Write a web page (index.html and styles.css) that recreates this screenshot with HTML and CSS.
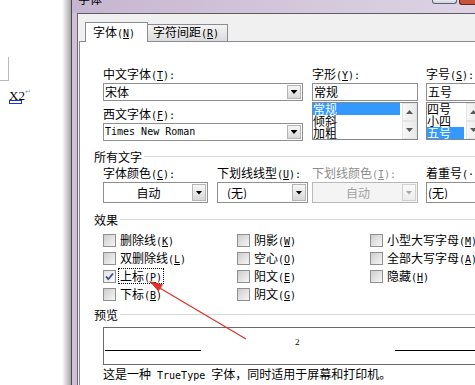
FILE: index.html
```html
<!DOCTYPE html>
<html lang="zh-CN">
<head>
<meta charset="utf-8">
<title>字体</title>
<link rel="stylesheet" href="styles.css">
</head>
<body>
<div class="screen">
  <div class="doc">
    <div class="corner"></div>
    <div class="xline">X2<span class="pmark">↵</span></div>
    <div class="tag"></div>
  </div>
  <div class="shadow"></div>
  <div class="dialog">
    <div class="titlebar">
      <span class="title">字体</span>
      <div class="tb-btns"><span class="tb-max"></span><span class="tb-close"></span></div>
    </div>
    <div class="frame">
      <div class="client">
        <div class="tabs">
          <div class="tab active">字体<span class="k">(<u>N</u>)</span></div>
          <div class="tab">字符间距<span class="k">(<u>R</u>)</span></div>
        </div>
        <div class="panel">
          <div class="fonts">
            <div class="col w200">
              <div class="lbl">中文字体<span class="k">(<u>T</u>):</span></div>
              <div class="combo"><span class="val">宋体</span><span class="dd"></span></div>
              <div class="lbl gap7">西文字体<span class="k">(<u>F</u>):</span></div>
              <div class="combo"><span class="val k">Times New Roman</span><span class="dd"></span></div>
            </div>
            <div class="col w106 ml9">
              <div class="lbl">字形<span class="k">(<u>Y</u>):</span></div>
              <div class="edit">常规</div>
              <div class="list">
                <div class="items"><div class="item sel">常规</div><div class="item">倾斜</div><div class="item">加粗</div></div>
                <div class="vscroll"><span class="sb up"></span><span class="sb down"></span></div>
              </div>
            </div>
            <div class="col w56 ml8">
              <div class="lbl">字号<span class="k">(<u>S</u>):</span></div>
              <div class="edit">五号</div>
              <div class="list">
                <div class="items"><div class="item">四号</div><div class="item">小四</div><div class="item sel">五号</div></div>
                <div class="vscroll"><span class="sb up"></span><span class="sb down"></span></div>
              </div>
            </div>
          </div>

          <div class="sep sep1">所有文字</div>

          <div class="attrs">
            <div class="col w105">
              <div class="lbl">字体颜色<span class="k">(<u>C</u>):</span></div>
              <div class="combo tall center"><span class="val">自动</span><span class="dd"></span></div>
            </div>
            <div class="col w91 ml9">
              <div class="lbl">下划线线型<span class="k">(<u>U</u>):</span></div>
              <div class="combo tall pad8"><span class="val">(无)</span><span class="dd"></span></div>
            </div>
            <div class="col w106 ml4">
              <div class="lbl dim">下划线颜色<span class="k">(<u>I</u>):</span></div>
              <div class="combo tall center off"><span class="val">自动</span><span class="dd"></span></div>
            </div>
            <div class="col w70 ml8">
              <div class="lbl">着重号<span class="k">(·)</span></div>
              <div class="combo tall"><span class="val">(无)</span><span class="dd"></span></div>
            </div>
          </div>

          <div class="sep sep2">效果</div>

          <div class="effects">
            <div class="cb"><span class="box"></span><span class="t">删除线<span class="k">(<u>K</u>)</span></span></div>
            <div class="cb"><span class="box"></span><span class="t">双删除线<span class="k">(<u>L</u>)</span></span></div>
            <div class="cb"><span class="box on"><svg width="11" height="11" viewBox="0 0 11 11"><path d="M2 5.5 L4.3 8.2 L9 2.5" fill="none" stroke="#3b4f86" stroke-width="1.8"/></svg></span><span class="t focus">上标<span class="k">(<u>P</u>)</span></span></div>
            <div class="cb"><span class="box"></span><span class="t">下标<span class="k">(<u>B</u>)</span></span></div>
            <div class="cb"><span class="box"></span><span class="t">阴影<span class="k">(<u>W</u>)</span></span></div>
            <div class="cb"><span class="box"></span><span class="t">空心<span class="k">(<u>O</u>)</span></span></div>
            <div class="cb"><span class="box"></span><span class="t">阳文<span class="k">(<u>E</u>)</span></span></div>
            <div class="cb"><span class="box"></span><span class="t">阴文<span class="k">(<u>G</u>)</span></span></div>
            <div class="cb"><span class="box"></span><span class="t">小型大写字母<span class="k">(<u>M</u>)</span></span></div>
            <div class="cb"><span class="box"></span><span class="t">全部大写字母<span class="k">(<u>A</u>)</span></span></div>
            <div class="cb"><span class="box"></span><span class="t">隐藏<span class="k">(<u>H</u>)</span></span></div>
          </div>

          <div class="sep sep3">预览</div>

          <div class="preview">
            <span class="pline pl-left"></span>
            <span class="pnum">2</span>
            <span class="pline pl-right"></span>
          </div>

          <div class="info">这是一种<span class="k"> TrueType </span>字体，同时适用于屏幕和打印机。</div>
        </div>
      </div>
    </div>
  </div>
  <svg class="arrow" width="475" height="385" viewBox="0 0 475 385">
    <line x1="246" y1="339" x2="158" y2="287" stroke="#e0302a" stroke-width="1.3"/>
    <polygon points="149,281 163,284.5 158.5,291.5" fill="#e0302a"/>
  </svg>
</div>
</body>
</html>
```
FILE: styles.css
```css
* { box-sizing: border-box; margin: 0; padding: 0; }
html, body { width: 475px; height: 385px; overflow: hidden; background: #fff; }
body { font-family: "Noto Sans CJK SC", "Noto Sans CJK JP", sans-serif; font-size: 12px; line-height: 12px; color: #000; }
.k { font-family: "DejaVu Sans Mono", "Liberation Mono", monospace; font-size: 10px; }
u { text-decoration: underline; text-underline-offset: 1px; }

.screen { position: relative; display: flex; width: 475px; height: 385px; overflow: hidden; }

/* document side */
.doc { flex: none; width: 62px; background: #fff; }
.corner { width: 9px; height: 24px; margin-top: 57px; border-right: 1px solid #b9b9b9; border-bottom: 1px solid #b9b9b9; }
.xline { height: 13px; margin-top: 5px; padding-left: 9px; font-family: "Liberation Serif", serif; font-size: 13px; line-height: 13px; white-space: nowrap; }
.pmark { font-family: "DejaVu Sans", sans-serif; font-size: 7px; color: #7b95c6; vertical-align: 6px; }
.tag { width: 13px; height: 4px; margin: 1px 0 0 9px; border: 1px solid #1f2fd0; }
.shadow { flex: none; width: 9px; background: linear-gradient(to right, #fff, #a5a5a5); }

/* dialog chrome */
.dialog { flex: 1; min-width: 0; display: flex; flex-direction: column; border-left: 1px solid #4e4a52; background: #cdc1d5; overflow: hidden; }
.titlebar { flex: none; display: flex; height: 13px; padding-left: 6px; background: linear-gradient(to right, #c6b5d0, #d4c7dc 55%, #ddd3e4); overflow: hidden; }
.title { margin-top: -7px; line-height: 12px; height: 12px; }
.tb-btns { margin-left: auto; display: flex; align-items: flex-start; gap: 2px; }
.tb-max { width: 25px; height: 4px; border: 1px solid #5d6170; border-top: none; border-radius: 0 0 3px 3px; background: linear-gradient(#e6e9ef, #cdd2dc); }
.tb-close { width: 16px; height: 5px; border: 1px solid #6d2418; border-top: none; border-right: none; border-radius: 0 0 0 3px; background: #c7533a; }
.frame { flex: 1; display: flex; padding-left: 5px; min-height: 0; }
.client { flex: 1; min-width: 0; display: flex; flex-direction: column; background: #f0f0f0; border-top: 1px solid #5f5c66; border-left: 1px solid #6a6870; padding-left: 1px; }

/* tabs */
.tabs { flex: none; height: 27px; display: flex; align-items: flex-end; padding-left: 6px; }
.tab { flex: none; height: 17px; width: 80px; padding: 1px 0 0 5px; border: 1px solid #898c95; border-left: none; border-bottom: none; background: linear-gradient(#f4f4f4, #dcdcdc); white-space: nowrap; }
.tab.active { position: relative; z-index: 1; height: 20px; width: 63px; margin-bottom: -1px; padding: 3px 0 0 7px; border-left: 1px solid #898c95; background: #fff; }
.panel { flex: 1; background: #fff; border-top: 1px solid #898c95; border-left: 1px solid #898c95; padding: 26px 0 0 14px; overflow: hidden; }

/* layout rows */
.fonts, .attrs { display: flex; margin-left: 9px; }
.attrs { margin-top: 4px; }
.col { flex: none; display: flex; flex-direction: column; }
.w200 { width: 200px; }
.w106 { width: 106px; }
.w105 { width: 105px; }
.w91 { width: 91px; }
.w56 { width: 56px; }
.w70 { width: 70px; }
.ml9 { margin-left: 9px; }
.ml8 { margin-left: 8px; }
.ml4 { margin-left: 4px; }
.lbl { height: 12px; margin-bottom: 3px; white-space: nowrap; }
.lbl.dim { color: #8d8d8d; }
.gap7 { margin-top: 7px; }

/* controls */
.combo { display: flex; align-items: center; height: 18px; border: 1px solid #8e8f8f; background: #fff; padding-left: 1px; }
.combo .val { flex: 1; min-width: 0; white-space: nowrap; overflow: hidden; }
.dd { flex: none; display: flex; align-items: center; justify-content: center; width: 14px; height: 14px; margin-right: 1px; border: 1px solid #b4b4b4; background: linear-gradient(#f7f7f7, #d8d8d8); }
.dd::after { content: ""; width: 7px; height: 4px; background: #000; clip-path: polygon(0 0, 100% 0, 50% 100%); }
.combo.tall { height: 21px; }
.combo.tall .dd { height: 17px; }
.center .val { text-align: center; }
.pad8 .val { padding-left: 8px; }
.combo.off { background: #f4f4f4; border-color: #b9b9b9; color: #a3a3a3; }
.combo.off .dd { border-color: #d0d0d0; background: linear-gradient(#fafafa, #ececec); }
.combo.off .dd::after { background: #a8a8a8; }
.edit { height: 18px; border: 1px solid #8e8f8f; padding: 2px 0 0 1px; white-space: nowrap; overflow: hidden; }
.list { display: flex; height: 38px; margin-top: 1px; border: 1px solid #828790; overflow: hidden; }
.items { flex: 1; min-width: 0; }
.item { height: 12px; white-space: nowrap; }
.item.sel { background: #3399ff; color: #fff; margin-right: 2px; }
.vscroll { flex: none; width: 15px; display: flex; flex-direction: column; background: #f0f0f0; }
.sb { flex: 1; display: flex; align-items: center; justify-content: center; border: 1px solid #e4e4e4; background: linear-gradient(to right, #f7f7f7, #e9e9e9); }
.sb::after { content: ""; width: 7px; height: 4px; background: #5a5a5a; }
.sb.up::after { clip-path: polygon(50% 0, 100% 100%, 0 100%); }
.sb.down::after { clip-path: polygon(0 0, 100% 0, 50% 100%); }

/* separators */
.sep { display: flex; height: 12px; white-space: nowrap; }
.sep::after { content: ""; flex: 1; height: 1px; margin: 5px 0 0 2px; background: #d8d8d8; }
.sep1 { margin-top: 10px; }
.sep2 { margin-top: 11px; }
.sep3 { margin-top: 6px; }

/* effects */
.effects { display: grid; grid-template-columns: 134px 133px 120px; grid-template-rows: repeat(4, 18px); grid-auto-flow: column; margin: 5px 0 0 9px; }
.cb { display: flex; align-items: center; gap: 2px; white-space: nowrap; }
.box { flex: none; width: 13px; height: 13px; border: 1px solid #8f8f8f; background: linear-gradient(135deg, #cdcdcd, #e6e6e6 60%, #f6f6f6); }
.box.on { display: flex; align-items: center; justify-content: center; background: linear-gradient(135deg, #e2e2e2, #fbfbfb); }
.cb .t { height: 16px; line-height: 16px; padding: 0 2px; }
.focus { outline: 1px dotted #000; outline-offset: -1px; }

/* preview */
.preview { display: flex; align-items: flex-start; width: 400px; height: 38px; margin: 6px 0 0 9px; border: 1px solid #6b6b6b; }
.pline { flex: none; height: 1px; background: #000; margin-top: 22px; }
.pl-left { width: 96px; margin-left: 1px; }
.pnum { flex: none; margin: 10px 0 0 94px; font-family: "Liberation Serif", serif; font-size: 9px; line-height: 9px; }
.pl-right { width: 120px; margin-left: 95px; }
.info { margin: 3px 0 0 9px; white-space: nowrap; }

.arrow { position: absolute; left: 0; top: 0; pointer-events: none; }
```
